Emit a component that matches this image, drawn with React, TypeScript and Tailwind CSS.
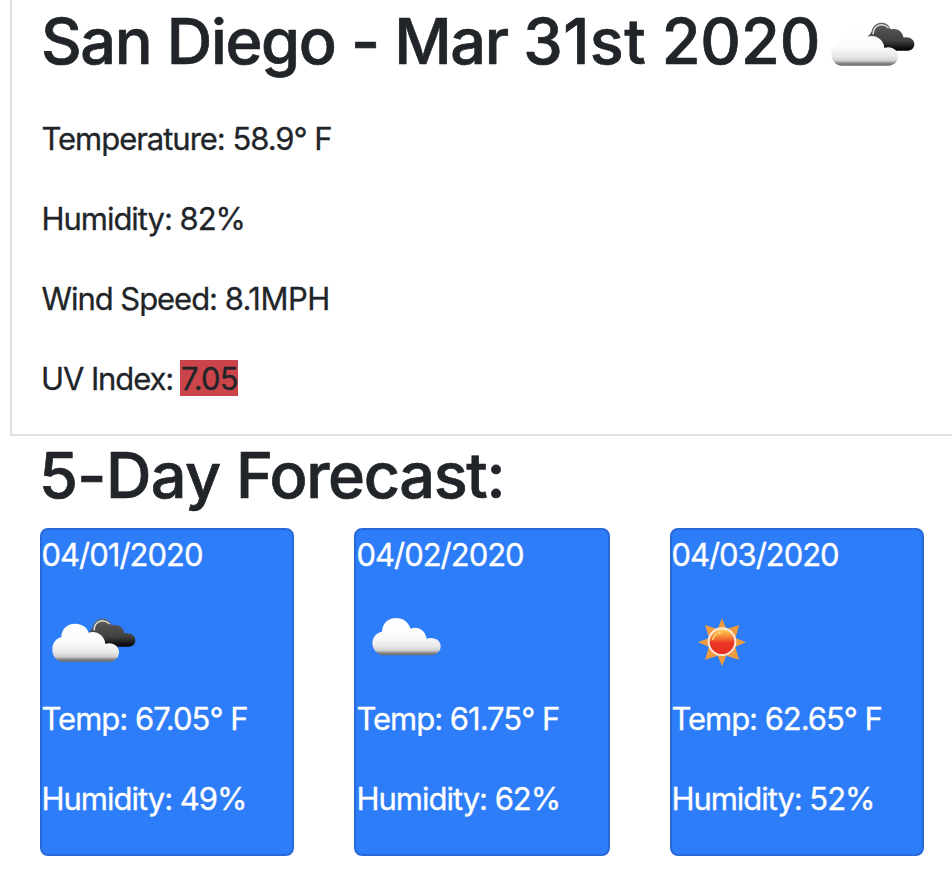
import React from "react";

type IconKind = "broken" | "cloud" | "sun";

function Defs({ id }: { id: string }) {
  return (
    <defs>
      <linearGradient id={`${id}-light`} x1="0" y1="0" x2="0" y2="1">
        <stop offset="0" stopColor="#ffffff" />
        <stop offset="0.5" stopColor="#fbfbfb" />
        <stop offset="0.76" stopColor="#e8e8e8" />
        <stop offset="0.87" stopColor="#cfcfcf" />
        <stop offset="0.94" stopColor="#858585" />
        <stop offset="1" stopColor="#6a6a6a" />
      </linearGradient>
      <linearGradient id={`${id}-dark`} x1="0" y1="0" x2="0" y2="1">
        <stop offset="0" stopColor="#626262" />
        <stop offset="0.3" stopColor="#4f4f4f" />
        <stop offset="0.65" stopColor="#404040" />
        <stop offset="0.95" stopColor="#080808" />
      </linearGradient>
      <linearGradient id={`${id}-sun`} x1="0" y1="0" x2="0" y2="1">
        <stop offset="0" stopColor="#ffdc70" />
        <stop offset="0.2" stopColor="#f9a840" />
        <stop offset="0.45" stopColor="#ef5a2a" />
        <stop offset="0.54" stopColor="#e93525" />
        <stop offset="1" stopColor="#e93022" />
      </linearGradient>
      <filter id={`${id}-soft`} x="-10%" y="-10%" width="120%" height="120%" colorInterpolationFilters="sRGB">
        <feGaussianBlur stdDeviation="2.1" />
      </filter>
    </defs>
  );
}

function WeatherIcon({ kind, id }: { kind: IconKind; id: string }) {
  if (kind === "broken") {
    return (
      <svg className="block size-[100px] shrink-0" viewBox="36 -24 300 300">
        <Defs id={id} />
        <g filter={`url(#${id}-soft)`}>
          <path
            d="M176 97C184 92 188 84 189 78C193 64 204 56 219 56C231 56 240 63 245 76C263 71 280 80 284 101C300 97 316 106 316 121C316 132 308 140 297 140H218Z"
            fill={`url(#${id}-dark)`}
          />
          <path d="M192 91C193 76 200 66 212 63C222 60 232 65 239 72" fill="none" stroke="#dcdcdc" strokeWidth="4.5" />
          <path
            d="M99 185C79 185 66 167 67 146C68 129 78 115 94 112C94 88 111 71 135 71C156 71 171 82 176 98C200 91 224 107 226 132C247 125 267 138 267 157C267 173 255 185 239 185Z"
            fill={`url(#${id}-light)`}
          />
        </g>
      </svg>
    );
  }
  if (kind === "cloud") {
    return (
      <svg className="block size-[100px] shrink-0" viewBox="18 -24 300 300">
        <Defs id={id} />
        <g filter={`url(#${id}-soft)`}>
          <path
            d="M97 166C80 162 67 147 67 129C67 113 79 98 96 95C97 70 114 54 138 54C159 54 175 66 182 86C204 77 226 91 230 116C252 109 272 121 272 139C272 154 261 164 245 166Z"
            fill={`url(#${id}-light)`}
          />
        </g>
      </svg>
    );
  }
  return (
    <svg className="block size-[100px] shrink-0" viewBox="6 -24 300 300">
      <Defs id={id} />
      <g filter={`url(#${id}-soft)`}>
        <path
          d="M156 55L169 87L208 75L196 114L228 127L196 140L207 179L169 167L156 199L143 167L105 179L117 140L84 127L117 114L105 75L143 87Z"
          fill="#ee9b3e"
        />
        <circle cx="156" cy="125" r="40" fill={`url(#${id}-sun)`} stroke="#fae8dd" strokeWidth="6" />
        <path d="M128 120C130 108 140 99 154 97" fill="none" stroke="#ffd98a" strokeWidth="4" />
      </g>
    </svg>
  );
}

function Line({ children, className = "" }: { children: React.ReactNode; className?: string }) {
  return (
    <p className={`mb-8 h-12 whitespace-nowrap text-[31px] leading-[48px] [-webkit-text-stroke:0.3px] ${className}`}>
      {children}
    </p>
  );
}

const days: { date: string; icon: IconKind; temp: string; humidity: string; box: string; text: string }[] = [
  { date: "04/01/2020", icon: "broken", temp: "67.05", humidity: "49", box: "w-[254px]", text: "-ml-[0.5px] tracking-[-1px]" },
  { date: "04/02/2020", icon: "cloud", temp: "61.75", humidity: "62", box: "w-[256px]", text: "ml-[0.5px] tracking-[-1.02px]" },
  { date: "04/03/2020", icon: "sun", temp: "62.65", humidity: "52", box: "w-[254px]", text: "-ml-[0.5px] tracking-[-1.05px]" },
];

export default function App() {
  return (
    <div className="h-[874px] w-[952px] overflow-hidden bg-white pl-[10px] font-['Inter','Liberation_Sans',sans-serif] text-[#212529]">
      <section className="h-[436px] border-b-2 border-l-2 border-[#dee2e6] pl-[30px]">
        <div className="flex h-[115px] items-start">
          <h1 className="-ml-px w-[780px] shrink-0 whitespace-nowrap pt-[3px] text-[63px] font-medium leading-[76px] tracking-[-1.35px] [-webkit-text-stroke:0.7px]">
            San Diego - Mar <span className="tracking-[0.5px]">31st</span>{" "}
            <span className="tracking-[-0.1px]">2020</span>
          </h1>
          <div className="-mt-1">
            <WeatherIcon kind="broken" id="now" />
          </div>
        </div>
        <Line className="-ml-[0.5px] tracking-[-1.03px]">Temperature: 58.9° F</Line>
        <Line className="-ml-[0.5px] tracking-[-1.03px]">Humidity: 82%</Line>
        <Line className="-ml-[0.5px] tracking-[-1.05px]">
          Wind Speed: <span className="tracking-[-0.5px]">8.1MPH</span>
        </Line>
        <Line className="-ml-px flex items-start tracking-[-1.1px]">
          <span className="w-[139px] shrink-0">UV Index:</span>
          <span className="mt-[5px] h-9 w-[58px] bg-[#cb444a] pl-px leading-[38px] tracking-[-0.9px]">7.05</span>
        </Line>
      </section>
      <section className="pl-[30px]">
        <h2 className="-ml-px h-[92px] whitespace-nowrap pt-[1px] text-[63px] font-medium leading-[76px] tracking-[-1.35px] [-webkit-text-stroke:0.7px]">
          <span className="tracking-[-0.6px]">5-Day</span> Forecast:
        </h2>
        <div className="flex gap-[60px]">
          {days.map((day) => (
            <article
              key={day.date}
              className={`h-[328px] shrink-0 rounded-lg border-2 border-[#276ad7] bg-[#2e7df8] pt-px text-white ${day.box}`}
            >
              <p className={`mb-[13px] h-12 text-[31px] leading-[48px] [-webkit-text-stroke:0.3px] ${day.text}`}>
                {day.date}
              </p>
              <div className="mb-[3px]">
                <WeatherIcon kind={day.icon} id={day.icon} />
              </div>
              <Line className={day.text}>Temp: {day.temp}° F</Line>
              <Line className={day.text}>Humidity: {day.humidity}%</Line>
            </article>
          ))}
        </div>
      </section>
    </div>
  );
}
